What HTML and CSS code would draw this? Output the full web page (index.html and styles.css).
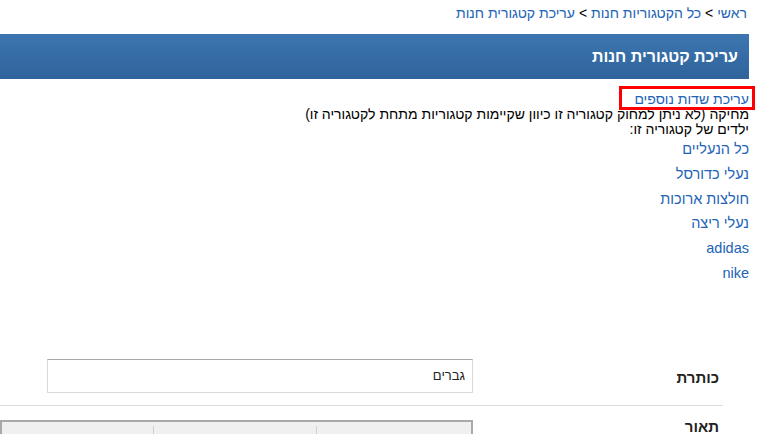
FILE: index.html
```html
<!DOCTYPE html>
<html lang="he" dir="rtl">
<head>
<meta charset="utf-8">
<title>עריכת קטגורית חנות</title>
<link rel="stylesheet" href="styles.css">
</head>
<body>
<div class="page">
  <nav class="crumbs">
    <a href="#">ראשי</a> <span class="sep">&gt;</span> <a href="#">כל הקטגוריות חנות</a> <span class="sep">&gt;</span> <a href="#">עריכת קטגורית חנות</a>
  </nav>
  <div class="bar"><h1 class="bar-title">עריכת קטגורית חנות</h1></div>
  <div class="info">
    <div class="info-line"><a href="#" class="edit-link">עריכת שדות נוספים</a></div>
    <div class="info-line">מחיקה (לא ניתן למחוק קטגוריה זו כיוון שקיימות קטגוריות מתחת לקטגוריה זו)</div>
    <div class="info-line">ילדים של קטגוריה זו:</div>
  </div>
  <ul class="children">
    <li><a href="#">כל הנעליים</a></li>
    <li><a href="#">נעלי כדורסל</a></li>
    <li><a href="#">חולצות ארוכות</a></li>
    <li><a href="#">נעלי ריצה</a></li>
    <li><a href="#">adidas</a></li>
    <li><a href="#">nike</a></li>
  </ul>
  <form class="form">
    <div class="row">
      <label class="label">כותרת</label>
      <input class="field" type="text" value="גברים">
    </div>
    <div class="row row-top">
      <label class="label label-top">תאור</label>
      <div class="editor">
        <div class="toolbar">
          <span class="tb-group tb-first">
            <i class="tb-icon"></i><i class="tb-icon"></i><i class="tb-icon"></i><i class="tb-icon"></i>
          </span>
          <span class="tb-group tb-mid"></span>
          <span class="tb-group tb-last"></span>
        </div>
      </div>
    </div>
  </form>
</div>
</body>
</html>
```

FILE: styles.css
```css
html, body {
  margin: 0;
  padding: 0;
  overflow: hidden;
  background: #fff;
}
body {
  font-family: "Liberation Sans", Arial, sans-serif;
  font-size: 14px;
  color: #000;
}
.page {
  width: 749px;
  margin-right: 20px;
  padding-top: 6px;
}
a {
  color: #2263b6;
  text-decoration: none;
}
.crumbs {
  line-height: 15px;
  padding-right: 2px;
  font-size: 14px;
}
.crumbs .sep {
  color: #000;
}
.bar {
  margin-top: 13px;
  height: 45px;
  background: linear-gradient(#3c76b1, #30639b);
  display: flex;
  align-items: center;
  padding-right: 11px;
}
.bar-title {
  margin: 0;
  color: #fff;
  font-size: 16px;
  font-weight: bold;
}
.info {
  margin-top: 13px;
  line-height: 15px;
}
.edit-link {
  position: relative;
  display: inline-block;
}
.edit-link::after {
  content: "";
  position: absolute;
  top: -6px;
  bottom: -3px;
  left: -15px;
  right: -6px;
  border: 3px solid #f00;
}
.children {
  list-style: none;
  margin: 0;
  padding: 0;
  font-size: 14.5px;
  line-height: 24.8px;
}
.form {
  margin-top: 59px;
  margin-right: 26px;
}
.row {
  display: flex;
  padding: 14px 0 12px;
  border-bottom: 1px solid #dcdcdc;
}
.row-top {
  border-bottom: 0;
}
.label {
  width: 250px;
  height: 34px;
  flex: none;
  box-sizing: border-box;
  padding-right: 4px;
  padding-top: 3px;
  font-size: 15px;
  font-weight: bold;
  line-height: 31px;
  color: #222;
}
.label-top {
  padding-top: 0;
  line-height: 14px;
}
.field {
  width: 426px;
  height: 34px;
  box-sizing: border-box;
  margin: 0;
  padding: 0 7px;
  border: 1px solid #dadada;
  border-top-color: #a8a8a8;
  font-family: "Liberation Sans", Arial, sans-serif;
  font-size: 13px;
  color: #222;
  direction: rtl;
  outline: none;
}
.editor {
  width: 473px;
  height: 60px;
  box-sizing: border-box;
  border: 2px solid #a9a9a9;
  background: #f0f0f0;
}
.toolbar {
  display: flex;
  height: 100%;
  padding-top: 4px;
  box-sizing: border-box;
}
.tb-group {
  display: flex;
  gap: 20px;
  padding: 9px 14px 0;
  border-left: 1px solid #cfcfcf;
}
.tb-first {
  width: 155px;
  flex: none;
  box-sizing: border-box;
}
.tb-mid {
  width: 163px;
  flex: none;
  box-sizing: border-box;
}
.tb-last {
  flex: 1;
  border-left: 0;
}
.tb-icon {
  display: block;
  width: 14px;
  height: 14px;
  background: #e4e4e4;
}
```
